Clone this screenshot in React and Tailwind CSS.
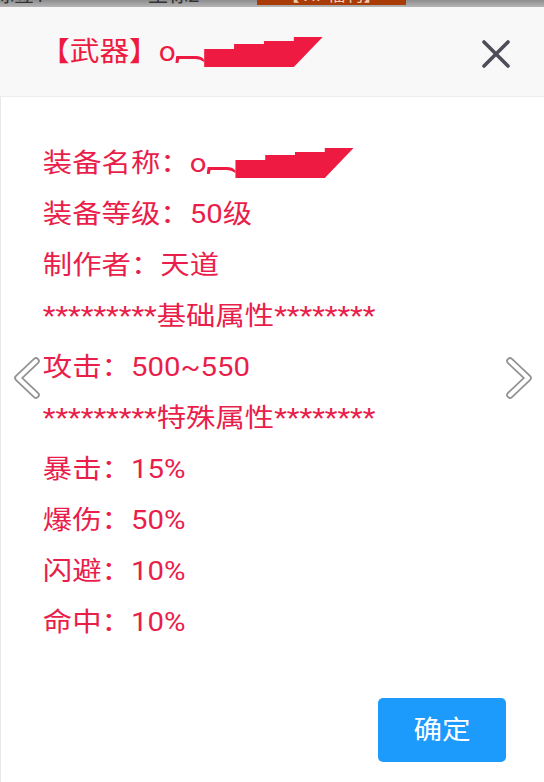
import React from "react";

const RED = "text-[#e91e4b]";

function Sword({ w = 134 }) {
  return (
    <svg
      width={w}
      height="32"
      viewBox="0 0 148 32"
      preserveAspectRatio="none"
      className="inline-block align-[-7px]"
    >
      <path d="M0 27 L1 20 L20 20 Q27 20 29 24 L29 26 Q25 23 20 23 L4 23 L3 27 Z" fill="#ee1a42" />
      <polygon
        points="29,13 59,13 59,8 89,8 89,5 119,5 119,1 148,1 119,31 29,31"
        fill="#ee1a42"
      />
    </svg>
  );
}

const lines = [
  "装备等级：50级",
  "制作者：天道",
  "*********基础属性********",
  "攻击：500~550",
  "*********特殊属性********",
  "暴击：15%",
  "爆伤：50%",
  "闪避：10%",
  "命中：10%",
];

function Chevron({ dir }) {
  const pts = dir === "left" ? "24,4 6,21 24,38" : "8,4 26,21 8,38";
  return (
    <svg width="32" height="42" viewBox="0 0 32 42">
      <polyline points={pts} fill="none" stroke="#6e6e6e" strokeWidth="7.5" strokeLinecap="round" strokeLinejoin="round" opacity="0.75" />
      <polyline points={pts} fill="none" stroke="#ffffff" strokeWidth="4" strokeLinecap="round" strokeLinejoin="round" />
    </svg>
  );
}

export default function App() {
  return (
    <div
      className="w-[544px] h-[782px] flex flex-col bg-white overflow-hidden"
      style={{ fontFamily: 'Roboto, "Noto Sans CJK SC", sans-serif' }}
    >
      {/* top strip of underlying page */}
      <div className="h-[7px] shrink-0 overflow-hidden flex items-start bg-gradient-to-b from-[#8e8e8e] to-[#b4b4b4]">
        <span className="-mt-[15px] ml-[-6px] text-[20px] leading-[20px] text-[#333] w-[154px]">标签1</span>
        <span className="-mt-[15px] text-[20px] leading-[20px] text-[#333] w-[109px]">坐标2</span>
        <span className="-mt-[15px] w-[149px] h-[20px] bg-[#a83b06] text-[18px] leading-[20px] text-[#f0c8b0] text-center">【VIP福利】</span>
      </div>

      {/* header */}
      <div className="h-[90px] shrink-0 flex items-center justify-between bg-[#f8f8f8] border-b border-[#ececec] pl-[40px] pr-[34px]">
        <div className="origin-left scale-x-[1.1] text-[27px] leading-none text-[#ee1a40] whitespace-nowrap">
          【武器】o<Sword />
        </div>
        <svg width="28" height="28" viewBox="0 0 28 28" className="mt-[4px]">
          <path d="M2 2 L26 26 M26 2 L2 26" stroke="#4d4d58" strokeWidth="3.6" strokeLinecap="round" />
        </svg>
      </div>

      {/* body */}
      <div className="relative flex-1 flex flex-col border-l border-[#e8e8e8]">
        <div className={`pt-[41px] pl-[37px] origin-left scale-x-[1.13] text-[26px] leading-[51px] ${RED} whitespace-nowrap`}>
          <div>
            装备名称：o<Sword w={130} />
          </div>
          {lines.map((t) => (
            <div key={t}>{t}</div>
          ))}
        </div>

        <div className="mt-auto flex justify-end pr-[38px] pb-[20px]">
          <button className="w-[128px] h-[64px] rounded-[5px] bg-[#1c9bfd] text-white text-[26px] leading-none">
            <span className="inline-block scale-x-[1.1]">确定</span>
          </button>
        </div>

        {/* carousel arrows */}
        <div className="absolute left-[11px] top-[260px]">
          <Chevron dir="left" />
        </div>
        <div className="absolute right-[10px] top-[260px]">
          <Chevron dir="right" />
        </div>
      </div>
    </div>
  );
}
